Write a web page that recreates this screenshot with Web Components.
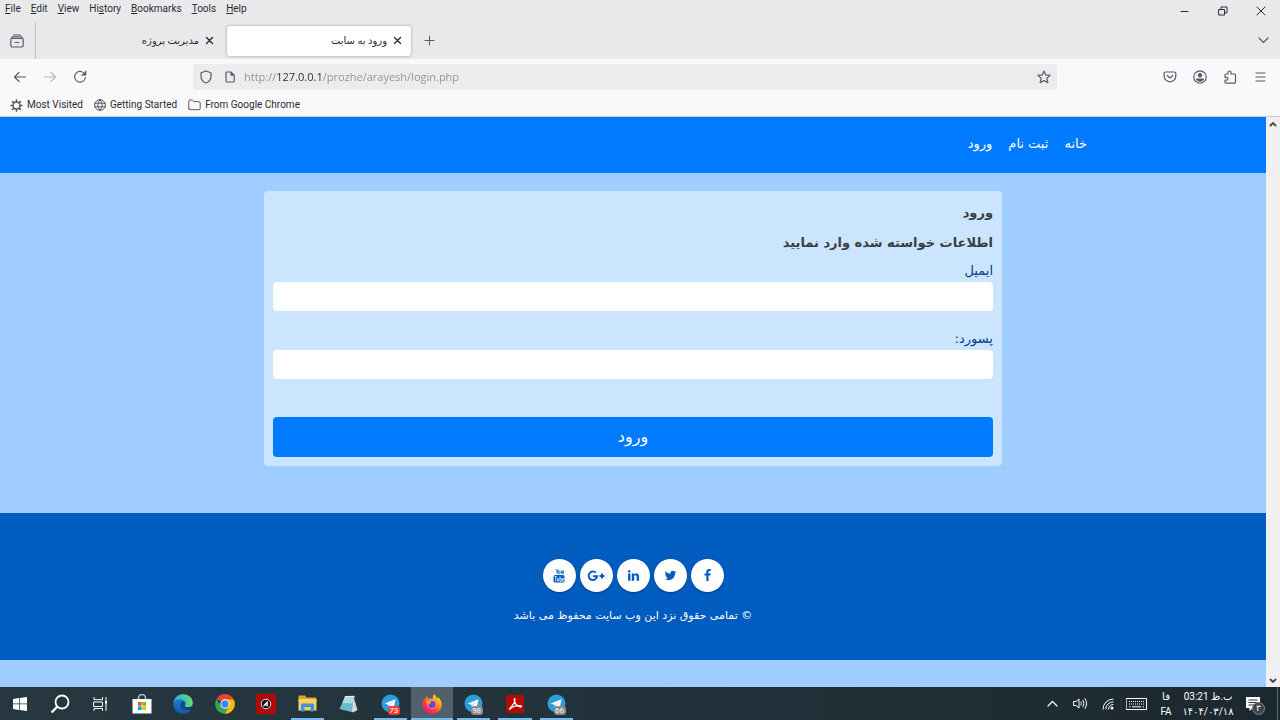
<!DOCTYPE html>
<html lang="fa">
<head>
<meta charset="utf-8">
<meta name="viewport" content="width=device-width, initial-scale=1">
<title>ورود به سایت</title>
<style>
html, body { margin: 0; height: 100%; }
body {
    display: flex; flex-direction: column;
    font: 10px/16px Roboto, "DejaVu Sans", sans-serif;
    color: #2b2a33;
}
.viewport { flex: 1; min-height: 0; display: flex; }
</style>
</head>
<body>

<ui-menu-bar></ui-menu-bar>
<ui-tab-strip>
    <ui-tab>مدیریت پروژه</ui-tab>
    <ui-tab active>ورود به سایت</ui-tab>
</ui-tab-strip>
<ui-nav-bar url="http://127.0.0.1/prozhe/arayesh/login.php"></ui-nav-bar>
<ui-bookmarks></ui-bookmarks>

<div class="viewport">
    <site-page>
        <site-header></site-header>
        <login-card>
            <span slot="title">ورود</span>
            <span slot="hint">اطلاعات خواسته شده وارد نمایید</span>
        </login-card>
        <site-footer>© تمامی حقوق نزد این وب سایت محفوظ می باشد</site-footer>
    </site-page>
    <ui-scrollbar></ui-scrollbar>
</div>

<ui-taskbar></ui-taskbar>

<script>
// ── Shared bits ─────────────────────────────────────────
const RESET = `
:host, * { box-sizing: border-box; }
button {
    display: flex; align-items: center; justify-content: center;
    margin: 0; padding: 0; border: none; background: none;
    font: inherit; color: inherit; cursor: pointer;
}
a { color: inherit; text-decoration: none; }
svg { display: block; }
.line { fill: none; stroke: currentColor; stroke-linecap: round; stroke-linejoin: round; }
`;

function render(host, css, html) {
    const shadow = host.attachShadow({ mode: 'open' });
    shadow.innerHTML = `<style>${RESET}${css}</style>${html}`;
    return shadow;
}

// ── Menu Bar ────────────────────────────────────────────
class UIMenuBar extends HTMLElement {
    connectedCallback() {
        render(this, `
:host { display: flex; justify-content: space-between; height: 22px; background: #e9e9eb; }
.menus { display: flex; align-items: flex-start; gap: 10px; padding: 1px 5px; }
u { text-underline-offset: 1px; }
.controls { display: flex; }
.controls button { width: 38px; }
`, `
<div class="menus">
    <button><span><u>F</u>ile</span></button>
    <button><span><u>E</u>dit</span></button>
    <button><span><u>V</u>iew</span></button>
    <button><span>Hi<u>s</u>tory</span></button>
    <button><span><u>B</u>ookmarks</span></button>
    <button><span><u>T</u>ools</span></button>
    <button><span><u>H</u>elp</span></button>
</div>
<div class="controls">
    <button aria-label="Minimize"><svg width="10" height="10"><path class="line" d="M1 5.5h7"/></svg></button>
    <button aria-label="Restore"><svg width="10" height="10"><path class="line" d="M1 3.5h5.5V9H1zM3 3.3V1h6v5.8H6.8"/></svg></button>
    <button aria-label="Close"><svg width="10" height="10"><path class="line" d="M1 1l8 8M9 1L1 9"/></svg></button>
</div>`);
    }
}
customElements.define('ui-menu-bar', UIMenuBar);

// ── Tab Strip ───────────────────────────────────────────
class UITabStrip extends HTMLElement {
    connectedCallback() {
        render(this, `
:host { display: flex; align-items: center; height: 37px; background: #e9e9eb; }
.view { width: 36px; height: 100%; border-right: 1px solid #c4c4c8; padding-right: 2px; }
.view, .new, .all { color: #5b5b66; }
.tabs { display: flex; gap: 4px; padding-left: 3px; }
.new, .all { width: 36px; height: 30px; }
.all { margin-left: auto; width: 34px; }
`, `
<button class="view" aria-label="Recent browsing">
    <svg width="14" height="14" viewBox="0 0 14 14"><path class="line" stroke-width="1.2" d="M3.5 1h7M2 4.5h10q1.200 0 1.200 1.200v5.600q0 1.700-1.700 1.700h-9Q.8 13 .8 11.300V5.700Q.8 4.500 2 4.500zM1.500 4.300Q1.500 2.900 3 2.900h8q1.500 0 1.500 1.400M5.200 8.500h3.600"/></svg>
</button>
<div class="tabs" role="tablist"><slot></slot></div>
<button class="new" aria-label="New tab"><svg width="11" height="11"><path class="line" d="M5.5 1v9M1 5.5h9"/></svg></button>
<button class="all" aria-label="List all tabs"><svg width="11" height="7"><path class="line" stroke-width="1.2" d="M1 1l4.500 4.500L10 1"/></svg></button>`);
    }
}
customElements.define('ui-tab-strip', UITabStrip);

class UITab extends HTMLElement {
    connectedCallback() {
        this.setAttribute('role', 'tab');
        render(this, `
:host {
    display: flex; align-items: center; justify-content: flex-end; gap: 6px;
    width: 184px; height: 30px; padding-right: 9px; border-radius: 3px;
}
:host([active]) { background: #fff; box-shadow: 0 0 3px rgba(0,0,0,.35); }
`, `
<span dir="rtl"><slot></slot></span>
<button aria-label="Close tab"><svg width="9" height="9"><path class="line" stroke-width="1.4" d="M1.500 1.500l6 6M7.500 1.500l-6 6"/></svg></button>`);
    }
}
customElements.define('ui-tab', UITab);

// ── Navigation Bar ──────────────────────────────────────
class UINavBar extends HTMLElement {
    connectedCallback() {
        const shadow = render(this, `
:host { display: flex; align-items: center; height: 35px; padding: 0 5px; background: #f9f9fb; color: #5b5b66; }
.tool { width: 30px; height: 30px; flex: none; }
.off { opacity: .4; }
.space { flex: 0 1 98px; }
.url {
    flex: 1; display: flex; align-items: center; height: 26px;
    padding: 0 1px; border-radius: 3px; background: #ececee;
}
.url button { width: 24px; height: 24px; }
/* the host part of the address is darker than the rest */
input {
    flex: 1; min-width: 0; height: 24px; padding: 0; margin-left: 2px; border: none; outline: none;
    font: 11px "Open Sans", sans-serif; color: #2b2a33;
    background: linear-gradient(90deg, #909098 33px, #2b2a33 33px, #2b2a33 78px, #909098 78px);
    -webkit-background-clip: text; background-clip: text; -webkit-text-fill-color: transparent;
}
`, `
<button class="tool" aria-label="Back"><svg width="14" height="12"><path class="line" stroke-width="1.2" d="M12.500 6H1.500M6 1.500L1.500 6 6 10.500"/></svg></button>
<button class="tool off" aria-label="Forward"><svg width="14" height="12"><path class="line" stroke-width="1.2" d="M1.500 6h11M8 1.500L12.500 6 8 10.500"/></svg></button>
<button class="tool" aria-label="Reload"><svg width="14" height="14"><path class="line" stroke-width="1.2" d="M12 4.600A5.400 5.400 0 1 0 12.400 7.500M12.700 1v4H8.700"/><path fill="currentColor" d="M13 1v4.300H8.700z"/></svg></button>
<div class="space"></div>
<div class="url">
    <button aria-label="Tracking protection"><svg width="12" height="14"><path class="line" stroke-width="1.2" d="M6 1l5 1.800v3.400c0 3-1.800 5.500-5 6.800C2.800 11.700 1 9.200 1 6.200V2.800z"/></svg></button>
    <button aria-label="Site information"><svg width="10" height="12"><path class="line" stroke-width="1.2" d="M6 1H2Q1 1 1 2v8q0 1 1 1h6.200q1 0 1-1V4.200z"/><path fill="currentColor" d="M5.500 1v3.700h3.900z"/></svg></button>
    <input type="text" aria-label="Address" spellcheck="false">
    <button aria-label="Bookmark this page"><svg width="14" height="14"><path class="line" stroke-width="1.2" d="M7 1l1.800 3.900 4.300.5-3.200 2.900.9 4.300L7 10.500l-3.800 2.100.9-4.300L.9 5.400l4.300-.5z"/></svg></button>
</div>
<div class="space"></div>
<button class="tool" aria-label="Save to Pocket"><svg width="14" height="12"><path class="line" stroke-width="1.2" d="M2.500 1h9q1.300 0 1.300 1.300v3A5.800 5.500 0 0 1 1.200 5.300v-3Q1.200 1 2.500 1zM4.200 4.500L7 7l2.800-2.500"/></svg></button>
<button class="tool" aria-label="Account"><svg width="14" height="14"><circle class="line" cx="7" cy="7" r="6.200" stroke-width="1.2"/><circle cx="7" cy="5.200" r="2.200" fill="currentColor"/><path fill="currentColor" d="M3.200 8.500h7.600v1.200A4.600 4.600 0 0 1 3.200 9.700z"/></svg></button>
<button class="tool" aria-label="Extensions"><svg width="14" height="14"><path class="line" stroke-width="1.2" d="M2 5q0-1 1-1h2V2.500a1.500 1.500 0 0 1 3 0V4h3.500q1 0 1 1v7.200q0 1-1 1H3q-1 0-1-1v-2h1.500a1.400 1.400 0 0 0 0-2.900H2z"/></svg></button>
<button class="tool" aria-label="Application menu"><svg width="11" height="10"><path class="line" stroke-width="1.2" d="M1 1h9M1 5h9M1 9h9"/></svg></button>`);
        shadow.querySelector('input').value = this.getAttribute('url');
    }
}
customElements.define('ui-nav-bar', UINavBar);

// ── Bookmarks Bar ───────────────────────────────────────
class UIBookmarks extends HTMLElement {
    connectedCallback() {
        render(this, `
:host {
    display: flex; align-items: center; gap: 11px; height: 23px; padding: 0 10px;
    background: #f9f9fb; border-bottom: 1px solid #c9ccd2;
}
a { display: flex; align-items: center; gap: 4px; white-space: nowrap; }
svg { color: #5b5b66; }
`, `
<a href="#"><svg width="13" height="13" viewBox="0 0 13 13"><circle class="line" cx="6.500" cy="6.500" r="3.500" stroke-width="1.5"/><path class="line" stroke-width="1.7" d="M6.500 1v1.500M6.500 10.500V12M1 6.500h1.500M10.500 6.500H12M2.600 2.600l1.100 1.100M9.300 9.300l1.100 1.100M2.600 10.400l1.100-1.100M9.300 3.700l1.100-1.100"/></svg>Most Visited</a>
<a href="#"><svg width="12" height="12" viewBox="0 0 12 12"><path class="line" d="M6 .6a5.400 5.400 0 1 0 0 10.800A5.400 5.400 0 1 0 6 .6zM6 .6Q1.500 6 6 11.400 10.500 6 6 .6M.8 4.200h10.400M.8 7.800h10.400"/></svg>Getting Started</a>
<a href="#"><svg width="13" height="12" viewBox="0 0 13 12"><path class="line" d="M.8 9.500V2.200Q.8 1 2 1h2.300l1.700 1.700h5q1.200 0 1.200 1.200v5.600q0 1.200-1.200 1.200H2Q.8 10.700.8 9.500z"/></svg>From Google Chrome</a>`);
    }
}
customElements.define('ui-bookmarks', UIBookmarks);

// ── Scrollbar ───────────────────────────────────────────
class UIScrollbar extends HTMLElement {
    connectedCallback() {
        render(this, `
:host {
    display: flex; flex-direction: column; justify-content: space-between;
    width: 14px; background: #f0f0f0; color: #505050;
}
button { height: 13px; }
`, `
<button aria-label="Scroll up"><svg width="8" height="6"><path class="line" stroke-width="2" d="M1.500 4.500L4 2l2.500 2.500"/></svg></button>
<button aria-label="Scroll down"><svg width="8" height="6"><path class="line" stroke-width="2" d="M1.500 1.500L4 4l2.500-2.500"/></svg></button>`);
    }
}
customElements.define('ui-scrollbar', UIScrollbar);

// ── Site ────────────────────────────────────────────────
class SitePage extends HTMLElement {
    connectedCallback() {
        this.dir = 'rtl';
        render(this, `
:host {
    flex: 1; min-width: 0; overflow: hidden; display: block; background: #9fcdff;
    font: 13px/20px "DejaVu Sans", sans-serif;
}
`, `<slot></slot>`);
    }
}
customElements.define('site-page', SitePage);

class SiteHeader extends HTMLElement {
    connectedCallback() {
        render(this, `
:host { display: block; background: #007bff; color: #fff; }
nav { display: flex; gap: 16px; max-width: 908px; margin: 0 auto; padding: 17px 0 19px; }
`, `
<nav>
    <a href="#">خانه</a>
    <a href="#">ثبت نام</a>
    <a href="#">ورود</a>
</nav>`);
    }
}
customElements.define('site-header', SiteHeader);

class LoginCard extends HTMLElement {
    connectedCallback() {
        render(this, `
:host {
    display: block; max-width: 738px; margin: 18px auto 47px;
    padding: 9px; border-radius: 4px; background: #cce5ff; color: #004085;
}
h1, h2 { margin: 0 0 4px; font-size: 13px; line-height: 26px; color: #383d41; }
label { display: block; line-height: 22px; }
input {
    display: block; width: 100%; height: 29px; margin-bottom: 17px; padding: 0 10px;
    border: none; border-radius: 4px; background: #fff; font: inherit; color: #495057;
}
form button {
    width: 100%; height: 40px; margin-top: 38px; border-radius: 4px;
    background: #007bff; color: #fff; font-size: 16px;
}
`, `
<h1><slot name="title"></slot></h1>
<h2><slot name="hint"></slot></h2>
<form>
    <label for="email">ایمیل</label>
    <input id="email" type="email">
    <label for="password">پسورد:</label>
    <input id="password" type="password">
    <button type="submit">ورود</button>
</form>`).querySelector('form').addEventListener('submit', e => e.preventDefault());
    }
}
customElements.define('login-card', LoginCard);

class SiteFooter extends HTMLElement {
    connectedCallback() {
        render(this, `
:host {
    display: flex; flex-direction: column; align-items: center; gap: 14px;
    padding: 46px 16px 34px; background: #005cbf; color: #fff; font-size: 11px;
}
.social { display: flex; gap: 4px; }
.social a {
    display: flex; align-items: center; justify-content: center;
    width: 33px; height: 33px; border-radius: 50%; background: #fff; color: #005cbf;
    box-shadow: 0 1px 2px rgba(0,0,0,.3);
}
.social svg { fill: currentColor; }
p { margin: 0; }
`, `
<div class="social">
    <a href="#" aria-label="Facebook"><svg width="13" height="13" viewBox="0 0 1792 1792"><path d="M1343 12v264h-157q-86 0-116 36t-30 108v189h293l-39 296h-254v759H734V905H479V609h255V391q0-186 104-288.500T1115 0q147 0 228 12z"/></svg></a>
    <a href="#" aria-label="Twitter"><svg width="13" height="13" viewBox="0 0 1792 1792"><path d="M1684 408q-67 98-162 167 1 14 1 42 0 130-38 259.500T1369.500 1125 1185 1335.500t-258 146-323 54.500q-271 0-496-145 35 4 78 4 225 0 401-138-105-2-188-64.500T285 1033q33 5 61 5 43 0 85-11-112-23-185.500-111.500T172 710v-4q68 38 146 41-66-44-105-115t-39-154q0-88 44-163 121 149 294.500 238.500T884 653q-8-38-8-74 0-134 94.500-228.500T1199 256q140 0 236 102 109-21 205-78-37 115-142 178 93-10 186-50z"/></svg></a>
    <a href="#" aria-label="LinkedIn"><svg width="13" height="13" viewBox="0 0 1792 1792"><path d="M477 625v991H147V625h330zm21-306q1 73-50.500 122T312 490h-2q-82 0-132-49t-50-122q0-74 51.500-122.500T314 148t133 48.500T498 319zm1166 729v568h-329v-530q0-105-40.500-164.500T1168 862q-63 0-105.500 34.500T999 982q-11 30-11 81v553H659q2-399 2-647t-1-296l-1-48h329v144h-2q20-32 41-56t56.500-52 87-43.500T1285 602q171 0 275 113.500t104 332.500z"/></svg></a>
    <a href="#" aria-label="Google Plus"><svg width="18" height="12" viewBox="0 0 18 12"><path fill="none" stroke="currentColor" stroke-width="1.9" d="M9 2.700A4.300 4.300 0 1 0 10.200 6.200H6M15 3.500v5M12.500 6h5"/></svg></a>
    <a href="#" aria-label="YouTube"><svg width="12" height="14" viewBox="0 0 12 14"><path fill="none" stroke="currentColor" stroke-width=".9" d="M3 .3l1.200 2.600L5.400.3M4.200 2.700V5M8.600 1.600v2.700q.7.700 1.500 0V1.600v3.200"/><rect x="5.600" y="2" width="1.500" height="2.700" rx=".7" fill="none" stroke="currentColor" stroke-width=".8"/><rect x=".5" y="6" width="11" height="7.600" rx="1.500"/><path stroke="#fff" stroke-width=".7" fill="none" d="M1.500 7.500h2.400M2.700 7.500v5M4.500 9v3h1.300V9M7 7.300v5h1.200V9.300H7M10.800 10.700H9.400V9.300h1.300v1.400M9.400 10.500v1.800h1.400"/></svg></a>
</div>
<p><slot></slot></p>`);
    }
}
customElements.define('site-footer', SiteFooter);

// ── Taskbar ─────────────────────────────────────────────
const telegram = (badge, tone = '') => `
<svg width="19" height="19" viewBox="0 0 19 19"><circle cx="9.500" cy="9.500" r="9" fill="#2a9fdc"/><path fill="#fff" d="M3.800 9.500l10.700-4.300-1.900 9.200-3-2.300-1.600 1.600-.3-2.800z"/><path fill="#b8dcf0" d="M7.700 10.900L13 6.700l-4.200 4.700-.8 2.300z"/></svg>
<span class="badge ${tone}">${badge}</span>`;

class UITaskbar extends HTMLElement {
    connectedCallback() {
        render(this, `
:host {
    display: flex; height: 33px; color: #fff;
    background: linear-gradient(90deg, #263740, #22323a 50%, #1c282f);
}
.start { display: flex; }
.start button { width: 40px; }
.apps { display: grid; grid-template-columns: repeat(11, 1fr); width: 456px; margin-left: 1px; }
.apps button { position: relative; }
.run::after {
    content: ""; position: absolute; bottom: 0; left: 4px; right: 4px; height: 2px; background: #76b9ed;
}
.on { background: #526069; }
.on::after { left: 0; right: 0; }
.badge {
    position: absolute; left: 18px; top: 19px; min-width: 12px; padding: 0 1px;
    border-radius: 3px; background: #8a8a8a; color: #fff; font-size: 8px; line-height: 9px;
}
.badge.red { background: #ee3b35; }
.tray { display: flex; align-items: center; margin-left: auto; }
.tray button { width: 28px; height: 100%; }
.lang, .clock { flex-direction: column; line-height: 15px; white-space: nowrap; }
.tray .lang { width: 32px; }
.tray .clock { width: 52px; }
.tray .notes { position: relative; width: 43px; padding-right: 6px; }
.count {
    position: absolute; left: 18px; top: 15px; width: 13px; height: 13px; border-radius: 50%;
    background: #3c4449; border: 1px solid #7d8589; font-size: 9px; line-height: 11px;
}
.desk { width: 3px; height: 100%; border-left: 1px solid #60686c; }
`, `
<div class="start">
    <button aria-label="Start"><svg width="14" height="14"><path fill="#fff" d="M0 2l6-.9v5.500H0zM6.700 1L14 0v6.600H6.700zM0 7.300h6v5.600L0 12zM6.700 7.300H14V14l-7.300-1z"/></svg></button>
    <button aria-label="Search"><svg width="20" height="20"><circle cx="12" cy="8" r="6.500" fill="none" stroke="#fff" stroke-width="1.8"/><path stroke="#fff" stroke-width="2.2" d="M7.400 12.600L1.500 18.500"/></svg></button>
    <button aria-label="Task view"><svg width="15" height="14"><path class="line" d="M1 .5v2.200h8.500V.5M1 5h8.500v4.500H1zM1 13.500v-2h8.500v2M13 .5v13"/><path fill="#fff" d="M12 4h2v2.500h-2z"/></svg></button>
</div>
<div class="apps">
    <button aria-label="Microsoft Store"><svg width="20" height="20"><path fill="none" stroke="#b9c1c5" stroke-width="1.5" d="M6.500 6V4a3.500 3.500 0 0 1 7 0v2"/><path fill="#fff" d="M.5 5h19v14.500H.5z"/><path fill="#f25022" d="M6 8h3.700v3.700H6z"/><path fill="#7fba00" d="M10.300 8H14v3.700h-3.700z"/><path fill="#00a4ef" d="M6 12.300h3.700V16H6z"/><path fill="#ffb900" d="M10.300 12.300H14V16h-3.700z"/></svg></button>
    <button aria-label="Edge"><svg width="20" height="20" viewBox="0 0 20 20">
        <defs>
            <linearGradient id="e1"><stop stop-color="#2aa9e8"/><stop offset="1" stop-color="#5fe06a"/></linearGradient>
            <linearGradient id="e2" x2="0" y2="1"><stop stop-color="#1b8ad8"/><stop offset="1" stop-color="#1358a8"/></linearGradient>
        </defs>
        <circle cx="10" cy="10" r="9.800" fill="url(#e2)"/>
        <path fill="url(#e1)" d="M.3 9.200C1.500 3.500 5.500.2 10.300.2c5.600 0 9.400 4 9.500 8.300 0 3-2.200 4.700-4.900 4.700-2.200 0-3.700-.9-3.200-2 .6-.7.9-1.400.7-2.300C11.600 6.500 8.800 5 5.900 5.300 3.200 5.500 1.200 7 .3 9.200z"/>
        <path fill="#0f4c96" d="M7.200 10.500c.5-1.900 2-3.200 4-3.200.9.6 1.400 1.500 1.200 2.600-.3 1-.9 1.300-.7 2.100.5 1.400 3.100 2 6.900.7-1 2.400-3.200 3.800-5.700 3.800-3.600-.2-6.100-2.800-5.700-6z"/>
        <path fill="#25353e" d="M11.500 11.500c.2 2 3.300 3.200 7.500 1.200l1 0v2l-1.200.3c-3.200 1.400-7 .2-7.300-3.500z"/>
    </svg></button>
    <button aria-label="Chrome"><svg width="20" height="20" viewBox="0 0 20 20"><path fill="#ea4335" d="M10 10L1.500 5A9.800 9.800 0 0 1 18.500 5z"/><path fill="#fbbc05" d="M10 5.500h8.700A9.800 9.800 0 0 1 9.500 19.800l4.400-7.500z"/><path fill="#34a853" d="M6.100 12.300L1.500 5A9.800 9.800 0 0 0 9.500 19.800l4.400-7.500z"/><circle cx="10" cy="10" r="4.700" fill="#fff"/><circle cx="10" cy="10" r="3.700" fill="#4285f4"/></svg></button>
    <button aria-label="Player"><svg width="20" height="20"><path fill="#b00808" d="M0 0h20v20H0z"/><circle cx="10" cy="10" r="4.800" fill="#111" stroke="#ddd"/><path fill="none" stroke="#fff" stroke-width="1.2" d="M7.500 12.200L11.200 8v4.400M9.300 11h2"/></svg></button>
    <button class="run" aria-label="File Explorer"><svg width="19" height="17"><path fill="#dda32c" d="M.5 1.500q0-1 1-1H7l1.500 2H17.500q1 0 1 1V7H.5z"/><path fill="#fbd063" d="M.5 4h18v11.500H.5z"/><path fill="#3c95d8" d="M3 9.500q0-1 1-1h11q1 0 1 1v7h-3.500V12h-6v4.500H3z"/></svg></button>
    <button aria-label="Notepad"><svg width="19" height="18"><path fill="#d5d8d2" d="M14.500 1.500L18.500 15l-4.500 2.500L12 16z"/><path fill="#6fb9cc" d="M6 1.500l9.500-.2L12.500 17 .5 14z"/><path fill="#a9dde6" d="M6 1.500l9.500-.2-1.500 7L3.500 8z"/><path fill="none" stroke="#eef5f5" d="M6 1.500l9.500-.2"/></svg></button>
    <button class="run" aria-label="Telegram">${telegram(73, 'red')}</button>
    <button class="run on" aria-label="Firefox"><svg width="20" height="20" viewBox="0 0 20 20">
        <defs><linearGradient id="f1" x1="1" x2=".2" y2="1"><stop stop-color="#fff44f"/><stop offset=".4" stop-color="#ff980e"/><stop offset=".7" stop-color="#ff3750"/><stop offset="1" stop-color="#e31587"/></linearGradient></defs>
        <path fill="url(#f1)" d="M12 .3c2 1.500 2.500 2.700 2.900 4 .8-.1 1.200-.6 1.300-1.300 2.300 2.300 3.500 4.900 3.500 7.800 0 5.200-4.300 9-9.700 9S.4 15.800.4 10.600C.4 8 1.200 6 2.500 4.500l.6 1.600L4.500 2l1.800 2.400c1.700-.5 3.300-.2 4.300.8-.1-2 .2-3.400 1.400-4.900z"/>
        <path fill="#ffb330" d="M6 7.200c2.200-2.300 7.200-1.900 8.200 2.200.8 3.800-3 6.400-6.200 4.900C5.300 13 4.500 9.300 6 7.200z"/>
        <circle cx="10" cy="10.400" r="3.600" fill="#7a3fe0"/>
        <path fill="#ffa726" d="M4 6.900c1.700-.5 4-.1 5.200 1-.1 1.100-1.900 1-2 2.300-2.200 0-3.500-1.300-3.200-3.300z"/>
    </svg></button>
    <button class="run" aria-label="Telegram">${telegram(98)}</button>
    <button class="run" aria-label="Acrobat"><svg width="18" height="18"><rect width="18" height="18" rx="2.500" fill="#b30b00"/><path fill="none" stroke="#fff" stroke-width="1.3" stroke-linejoin="round" d="M3.500 14.200C5 11 9.200 9.500 9 4.500Q8.500 2.700 8.200 4.500C8.300 8.500 11.500 12 15 12q1-1-.8-1.400C10.500 10.300 6 11.700 3.500 14.200z"/></svg></button>
    <button class="run" aria-label="Telegram">${telegram(66)}</button>
</div>
<div class="tray">
    <button aria-label="Show hidden icons"><svg width="11" height="7"><path class="line" stroke-width="1.2" d="M1 6l4.500-4.500L10 6"/></svg></button>
    <button aria-label="Volume"><svg width="15" height="13"><path class="line" d="M1 4.500h2L6 2v9L3 8.500H1zM8 5q1 1.500 0 3M10 3.200q2.200 3.300 0 6.600M12 1.500q3.500 5 0 10"/></svg></button>
    <button aria-label="Network"><svg width="12" height="12"><path class="line" d="M1 11A10 10 0 0 1 11 1M3.800 11A7.200 7.200 0 0 1 11 3.800M6.500 11A4.500 4.500 0 0 1 11 6.500"/><circle cx="10" cy="10" r="1.500" fill="#fff"/></svg></button>
    <button aria-label="Touch keyboard"><svg width="21" height="12"><path class="line" d="M.5.5h20v11H.5z"/><path stroke="#fff" stroke-dasharray="1 1" d="M3 3.500h15M3 6h15"/><path stroke="#fff" d="M6 8.800h9M3 8.800h1.500M16.500 8.800H18"/></svg></button>
    <button class="lang" aria-label="Keyboard layout"><span>فا</span><span>FA</span></button>
    <button class="clock" aria-label="Clock"><span dir="rtl">ب.ظ 03:21</span><span>۱۴۰۴/۰۳/۱۸</span></button>
    <button class="notes" aria-label="Notifications"><svg width="14" height="14"><path fill="#fff" d="M0 0h14v11H6.500L3.500 14v-3H0z"/><path stroke="#26343b" d="M2.500 3h9M2.500 5.500h9M2.500 8h6"/></svg><span class="count">۳</span></button>
    <div class="desk"></div>
</div>`);
    }
}
customElements.define('ui-taskbar', UITaskbar);
</script>
</body>
</html>
